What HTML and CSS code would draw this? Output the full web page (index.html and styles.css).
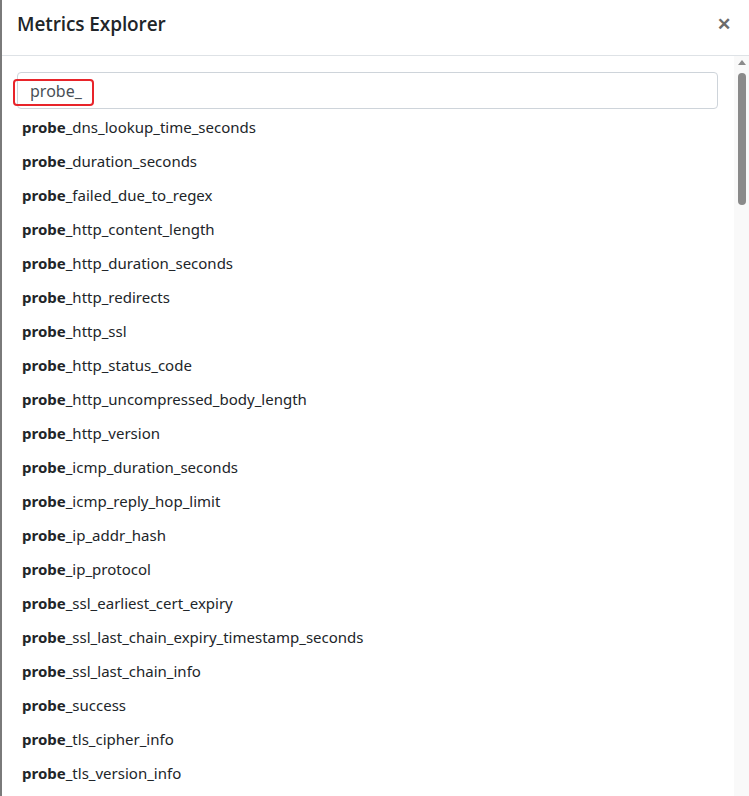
FILE: index.html
```html
<!DOCTYPE html>
<html>
<head>
<meta charset="utf-8">
<link rel="stylesheet" href="styles.css">
</head>
<body>
<div class="modal">
  <div class="header">
    <h1 class="title">Metrics Explorer</h1>
    <span class="close">&#x2715;</span>
  </div>
  <div class="main">
    <div class="content">
      <div class="search">
        <div class="input">probe_</div>
        <div class="highlight"></div>
      </div>
      <ul class="list">
        <li><b>probe</b>_dns_lookup_time_seconds</li>
        <li><b>probe</b>_duration_seconds</li>
        <li><b>probe</b>_failed_due_to_regex</li>
        <li><b>probe</b>_http_content_length</li>
        <li><b>probe</b>_http_duration_seconds</li>
        <li><b>probe</b>_http_redirects</li>
        <li><b>probe</b>_http_ssl</li>
        <li><b>probe</b>_http_status_code</li>
        <li><b>probe</b>_http_uncompressed_body_length</li>
        <li><b>probe</b>_http_version</li>
        <li><b>probe</b>_icmp_duration_seconds</li>
        <li><b>probe</b>_icmp_reply_hop_limit</li>
        <li><b>probe</b>_ip_addr_hash</li>
        <li><b>probe</b>_ip_protocol</li>
        <li><b>probe</b>_ssl_earliest_cert_expiry</li>
        <li><b>probe</b>_ssl_last_chain_expiry_timestamp_seconds</li>
        <li><b>probe</b>_ssl_last_chain_info</li>
        <li><b>probe</b>_success</li>
        <li><b>probe</b>_tls_cipher_info</li>
        <li><b>probe</b>_tls_version_info</li>
      </ul>
    </div>
    <div class="scrollbar">
      <div class="arrow"></div>
      <div class="thumb"></div>
    </div>
  </div>
</div>
</body>
</html>
```
FILE: styles.css
```css
html, body {
  margin: 0;
  padding: 0;
  height: 100%;
  background: #fff;
}
body {
  font-family: "Noto Sans", "Open Sans", sans-serif;
  color: #212529;
  overflow: hidden;
}
.modal {
  height: 796px;
  display: flex;
  flex-direction: column;
  border-left: 2px solid #7a7a7a;
  box-sizing: border-box;
}
.header {
  height: 56px;
  flex: none;
  display: flex;
  align-items: center;
  justify-content: space-between;
  padding: 0 18px 8px 15px;
  box-sizing: border-box;
  border-bottom: 1px solid #dee2e6;
}
.title {
  margin: 0;
  font-family: "Open Sans", "Noto Sans", sans-serif;
  font-size: 19px;
  font-weight: 600;
  color: #212529;
  letter-spacing: -0.1px;
}
.close {
  font-size: 17px;
  font-weight: 700;
  color: #6c6c6c;
  line-height: 1;
}
.main {
  flex: 1;
  display: flex;
  overflow: hidden;
}
.content {
  flex: 1;
  padding: 16px 16px 0 15px;
  overflow: hidden;
}
.search {
  position: relative;
}
.input {
  height: 37px;
  box-sizing: border-box;
  border: 1px solid #ced4da;
  border-radius: 4px;
  padding: 0 12px;
  display: flex;
  align-items: center;
  font-size: 16px;
  color: #495057;
}
.highlight {
  position: absolute;
  left: -4px;
  top: 7px;
  width: 81px;
  height: 27px;
  box-sizing: border-box;
  border: 2px solid #e8242a;
  border-radius: 4px;
}
.list {
  list-style: none;
  margin: 1px 0 0;
  padding: 0;
}
.list li {
  height: 34px;
  line-height: 34px;
  padding-left: 5px;
  font-size: 15px;
  white-space: nowrap;
}
.list b {
  font-weight: 700;
}
.scrollbar {
  width: 15px;
  flex: none;
  background: #f9f9f9;
  display: flex;
  flex-direction: column;
  align-items: center;
}
.arrow {
  margin-top: 4px;
  width: 0;
  height: 0;
  border-left: 4px solid transparent;
  border-right: 4px solid transparent;
  border-bottom: 5px solid #8a8a8a;
}
.thumb {
  margin-top: 8px;
  width: 8px;
  height: 132px;
  border-radius: 4px;
  background: #8a8a8a;
}
```
